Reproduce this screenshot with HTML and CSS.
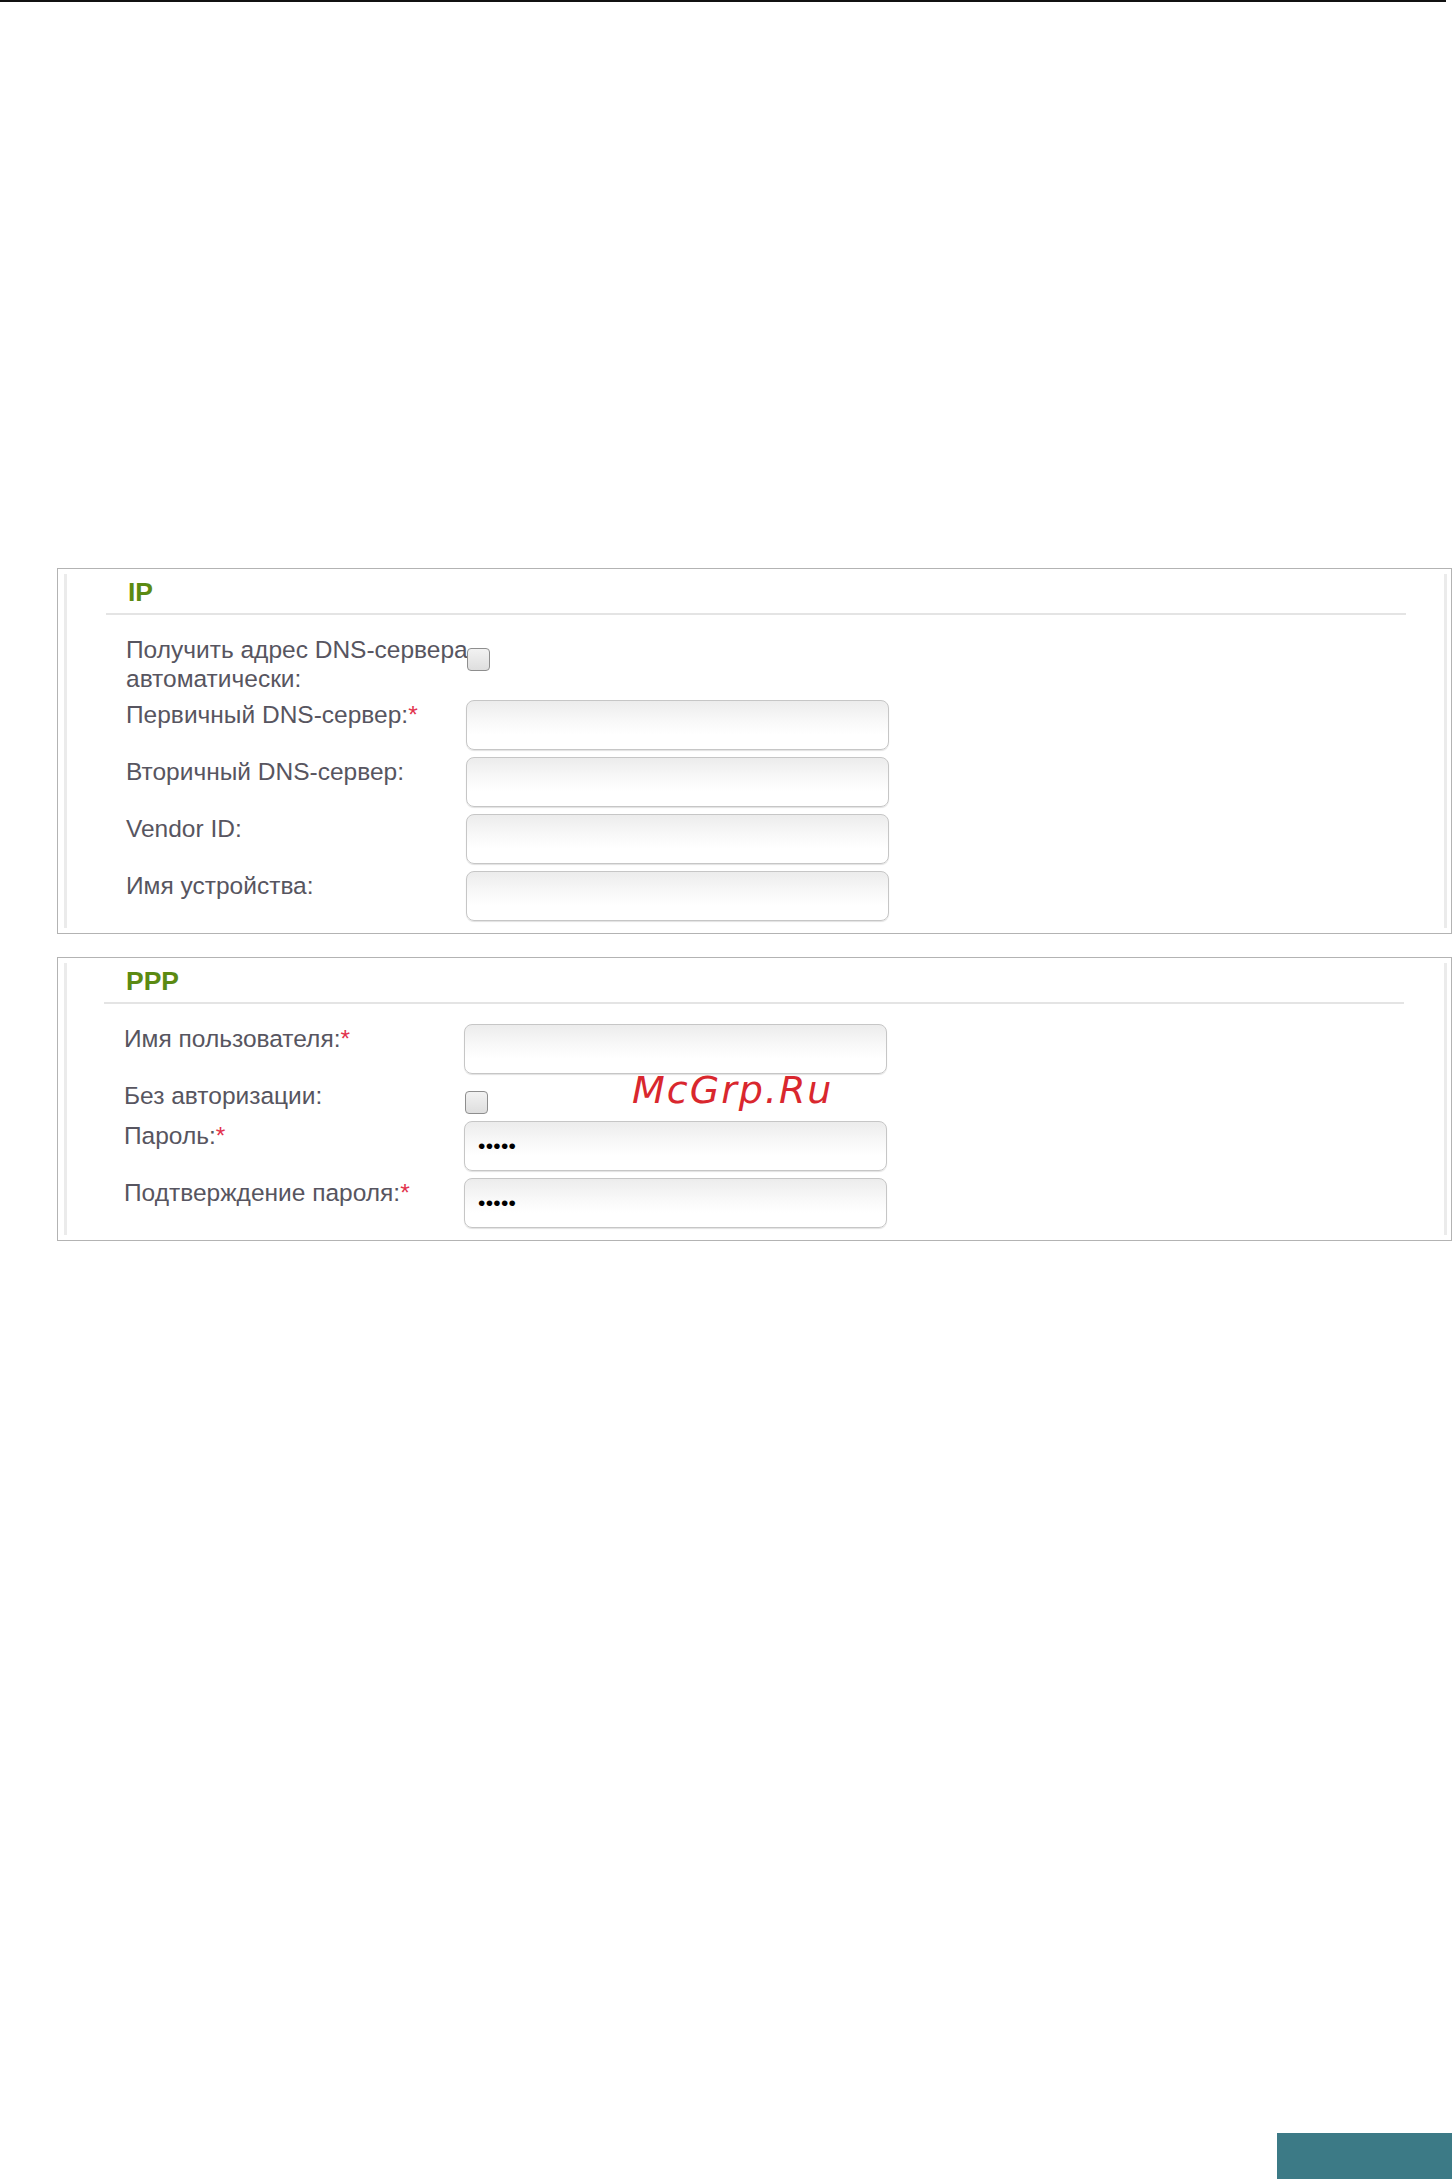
FILE: index.html
```html
<!DOCTYPE html>
<html lang="ru">
<head>
<meta charset="utf-8">
<title>IP / PPP</title>
<link rel="stylesheet" href="styles.css">
</head>
<body>
<div class="page">
  <div class="topline"></div>
  <main class="content">
    <section class="panel">
      <div class="panel-body">
        <h2 class="panel-title">IP</h2>
        <div class="rows">
          <div class="row">
            <label class="label label-nowrap">Получить адрес DNS-сервера<br>автоматически:</label>
            <input type="checkbox" class="check check-ip">
          </div>
          <div class="row">
            <label class="label">Первичный DNS-сервер:<span class="req">*</span></label>
            <input type="text" class="field">
          </div>
          <div class="row">
            <label class="label">Вторичный DNS-сервер:</label>
            <input type="text" class="field">
          </div>
          <div class="row">
            <label class="label">Vendor ID:</label>
            <input type="text" class="field">
          </div>
          <div class="row">
            <label class="label">Имя устройства:</label>
            <input type="text" class="field">
          </div>
        </div>
      </div>
    </section>

    <section class="panel">
      <div class="panel-body panel-body-ppp">
        <h2 class="panel-title">PPP</h2>
        <div class="rows">
          <div class="row">
            <label class="label">Имя пользователя:<span class="req">*</span></label>
            <input type="text" class="field">
          </div>
          <div class="row">
            <label class="label">Без авторизации:</label>
            <input type="checkbox" class="check check-ppp">
          </div>
          <div class="row">
            <label class="label">Пароль:<span class="req">*</span></label>
            <input type="password" class="field field-pass" value="12345">
          </div>
          <div class="row">
            <label class="label">Подтверждение пароля:<span class="req">*</span></label>
            <input type="password" class="field field-pass" value="12345">
          </div>
        </div>
      </div>
    </section>
  </main>
  <div class="watermark">McGrp.Ru</div>
  <div class="footer-tab"></div>
</div>
</body>
</html>
```

FILE: styles.css
```css
html, body {
  margin: 0;
  padding: 0;
  background: #ffffff;
}

body {
  font-family: "Liberation Sans", Arial, sans-serif;
}

.page {
  position: relative;
  min-height: 2179px;
  display: flex;
  flex-direction: column;
}

.topline {
  width: 1446px;
  height: 2px;
  background: #111111;
  flex: none;
}

.content {
  padding: 566px 0 0 57px;
  display: flex;
  flex-direction: column;
  gap: 23px;
}

.panel {
  width: 1395px;
  box-sizing: border-box;
  border: 1px solid #b3b3b3;
  padding: 5px 4px 5px 6px;
  background: #ffffff;
}

.panel-body {
  border-left: 3px solid #ebebeb;
  border-right: 3px solid #ebebeb;
  padding: 3px 38px 7px 39px;
}

.panel-body-ppp {
  padding-left: 37px;
  padding-right: 40px;
}

.panel-title {
  margin: 0;
  padding: 0 0 6px 22px;
  font-size: 26.5px;
  line-height: 30px;
  font-weight: bold;
  color: #5b8a12;
  border-bottom: 2px solid #e4e4e4;
}

.rows {
  margin-top: 20px;
  padding-left: 20px;
  display: flex;
  flex-direction: column;
  gap: 7px;
}

.row {
  display: flex;
  align-items: flex-start;
}

.label {
  width: 340px;
  flex: none;
  font-size: 24.5px;
  line-height: 29px;
  color: #575560;
}

.label-nowrap {
  white-space: nowrap;
}

.req {
  color: #e2334d;
}

.field {
  -webkit-appearance: none;
  appearance: none;
  width: 423px;
  height: 50px;
  box-sizing: border-box;
  margin: 0;
  padding: 0 13px;
  border: 1px solid #c6c6c6;
  border-radius: 8px;
  background: linear-gradient(to bottom, #ececec 0%, #f8f8f8 40%, #ffffff 70%, #ffffff 100%);
  box-shadow: 0 1px 1px rgba(0, 0, 0, 0.12);
  font-family: "Liberation Sans", Arial, sans-serif;
  font-size: 21px;
  color: #000000;
  outline: none;
}

.field-pass {
  letter-spacing: 0.3px;
}

.check {
  -webkit-appearance: none;
  appearance: none;
  flex: none;
  width: 23px;
  height: 23px;
  box-sizing: border-box;
  margin: 13px 0 0 1px;
  border: 1px solid #8e8e8e;
  border-radius: 4px;
  background: linear-gradient(to bottom, #f2f2f2 0%, #dedede 100%);
}

.check-ppp {
  margin-top: 10px;
}

.watermark {
  position: absolute;
  left: 632px;
  top: 1071px;
  font-family: "DejaVu Sans", sans-serif;
  font-style: italic;
  font-size: 38px;
  line-height: 38px;
  letter-spacing: 2px;
  color: #d9272e;
  white-space: nowrap;
}

.footer-tab {
  margin-top: auto;
  align-self: flex-end;
  width: 175px;
  height: 46px;
  background: #3c7a86;
}
```
